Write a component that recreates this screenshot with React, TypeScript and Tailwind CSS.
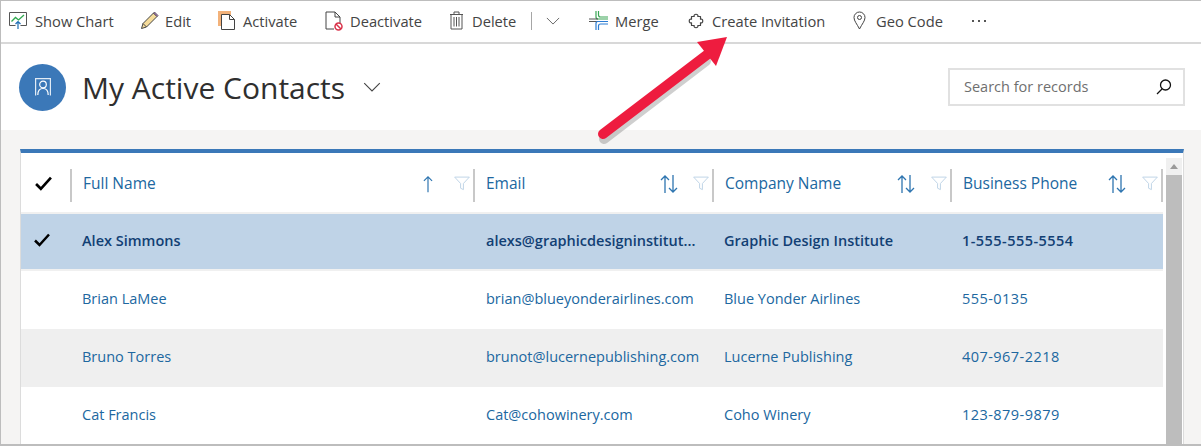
const font = { fontFamily: '"Open Sans", "Noto Sans", sans-serif' };

const rows = [
  { name: "Alex Simmons", email: "alexs@graphicdesigninstitut...", company: "Graphic Design Institute", phone: "1-555-555-5554" },
  { name: "Brian LaMee", email: "brian@blueyonderairlines.com", company: "Blue Yonder Airlines", phone: "555-0135" },
  { name: "Bruno Torres", email: "brunot@lucernepublishing.com", company: "Lucerne Publishing", phone: "407-967-2218" },
  { name: "Cat Francis", email: "Cat@cohowinery.com", company: "Coho Winery", phone: "123-879-9879" },
];

function ChartIcon() {
  return (
    <svg width="18" height="17" viewBox="0 0 18 17" fill="none">
      <path d="M6.500 13.500H.5V.5h17v13h-6" stroke="#555" strokeWidth="1" />
      <path d="M2.500 9.500l4-4 3 2.500 5.500-5" stroke="#2fa84f" strokeWidth="1.300" />
      <path d="M9 17v-7.500M6.500 12L9 9.500l2.500 2.500" stroke="#1f6fb5" strokeWidth="1.200" />
    </svg>
  );
}

function PencilIcon() {
  return (
    <svg width="19" height="19" viewBox="0 0 19 19" fill="none">
      <path d="M1.500 17.500l1.500-5L13.500 2l3.500 3.500L6.500 16z" fill="#f6dc9a" stroke="#444" strokeWidth="1" />
      <path d="M13.500 2l1-1 3.500 3.500-1 1z" fill="#b57bc4" stroke="#444" strokeWidth="0.8" />
      <path d="M3 12.500L6.500 16" stroke="#444" strokeWidth="1" />
    </svg>
  );
}

function ActivateIcon() {
  return (
    <svg width="17" height="19" viewBox="0 0 17 19" fill="none">
      <path d="M0 0h13v4H4v11H0z" fill="#f3b27a" />
      <path d="M3.500 3.500h8l5 5v10h-13z" fill="#fff" stroke="#444" strokeWidth="1" />
      <path d="M11.500 3.500v5h5" stroke="#444" strokeWidth="1" />
    </svg>
  );
}

function DeactivateIcon() {
  return (
    <svg width="18" height="20" viewBox="0 0 18 20" fill="none">
      <path d="M1 1h9l5 5v6M1 1v17h8" stroke="#444" strokeWidth="1" />
      <path d="M10 1v5h5" stroke="#444" strokeWidth="1" />
      <circle cx="13.500" cy="15.500" r="3.500" fill="#fff" stroke="#d9324a" strokeWidth="1.500" />
      <path d="M11 13l5 5" stroke="#d9324a" strokeWidth="1.500" />
    </svg>
  );
}

function TrashIcon() {
  return (
    <svg width="15" height="19" viewBox="0 0 15 19" fill="none" stroke="#555" strokeWidth="1">
      <path d="M1 3.500h13M5 3.500v-2.500h5v2.500M2 3.500v14.500h11V3.500" />
      <path d="M5 6v9.500M7.500 6v9.500M10 6v9.500" />
    </svg>
  );
}

function MergeIcon() {
  return (
    <svg width="19" height="19" viewBox="0 0 19 19" fill="none" strokeWidth="1.200">
      <path d="M7 0v6q0 2 2 2h10" stroke="#3aa655" />
      <path d="M9.500 0v4q0 2 2 2H19" stroke="#3aa655" />
      <path d="M0 8h9M0 10.500h9" stroke="#555" />
      <path d="M19 10.500H9q-2 0-2 2V19" stroke="#2b7cd3" />
      <path d="M19 13h-7.500q-2 0-2 2v4" stroke="#2b7cd3" />
    </svg>
  );
}

function PuzzleIcon() {
  return (
    <svg width="16" height="16" viewBox="0 0 16 16" fill="none" stroke="#444" strokeWidth="1.200" strokeLinejoin="round">
      <path d="M3.500 3.500H6.200c-1.200-3 4.800-3 3.600 0h2.700v2.700c3-1.200 3 4.800 0 3.600v2.700H9.800c1.200 3-4.800 3-3.600 0H3.500V9.800c-3 1.200-3-4.800 0-3.600z" />
    </svg>
  );
}

function PinIcon() {
  return (
    <svg width="13" height="19" viewBox="0 0 13 19" fill="none" stroke="#444" strokeWidth="1">
      <path d="M6.500 18C4 13 1 10 1 6.500a5.500 5.500 0 0 1 11 0C12 10 9 13 6.500 18z" />
      <circle cx="6.500" cy="6.500" r="2" />
    </svg>
  );
}

function Chevron({ w, h, color }: { w: number; h: number; color: string }) {
  return (
    <svg width={w} height={h} viewBox="0 0 16 9" fill="none">
      <path d="M1 1l7 7 7-7" stroke={color} strokeWidth="1" />
    </svg>
  );
}

function Check({ size }: { size: number }) {
  return (
    <svg width={size} height={size} viewBox="0 0 16 16" fill="none">
      <path d="M1 8.500l4.500 4.500L15 2.500" stroke="#000" strokeWidth="2.500" />
    </svg>
  );
}

function FilterIcon() {
  return (
    <svg width="16" height="15" viewBox="0 0 17 15" fill="none">
      <path d="M.7.700h15.600L10 7.500v6.500l-3-1.500v-5z" stroke="#bcd2e5" strokeWidth="1" />
    </svg>
  );
}

function UpArrow() {
  return (
    <svg width="10" height="18" viewBox="0 0 11 18" fill="none" stroke="#2e75b0" strokeWidth="1.300">
      <path d="M5.500 18V1M1 5.500L5.500 1 10 5.500" />
    </svg>
  );
}

function SortArrows() {
  return (
    <svg width="18" height="18" viewBox="0 0 18 18" fill="none" stroke="#2e75b0" strokeWidth="1.300">
      <path d="M5 18V1M1 5L5 1l4 4" />
      <path d="M13 0v17M9 13l4 4 4-4" />
    </svg>
  );
}

function ToolItem({ icon, label, className }: { icon: React.ReactNode; label: string; className: string }) {
  return (
    <div className={`flex items-center ${className}`}>
      {icon}
      <span className="text-[14.700px] text-[#444] whitespace-nowrap">{label}</span>
    </div>
  );
}

function HeaderCell({ label, icon, iconGap }: { label: string; icon: React.ReactNode; iconGap: string }) {
  return (
    <div className="flex items-center border-r-2 border-[#c8c8c8] h-[33px] pb-[4px] pl-[11px] pr-[3px]">
      <span className="text-[15.500px] text-[#20679f] flex-1 whitespace-nowrap">{label}</span>
      <div className={iconGap}>{icon}</div>
      <FilterIcon />
    </div>
  );
}

const gridCols = "grid grid-cols-[51px_403px_239px_238px_211px]";

export default function App() {
  return (
    <div className="relative h-[446px] w-[1201px] overflow-hidden bg-[#f5f4f3] border-l border-t border-b-2 border-[#bdbdbd]" style={font}>
      {/* command bar */}
      <div className="flex items-center h-[43px] bg-white border-b-2 border-[#d8d8d8] pb-[1px] pl-[8px]">
        <ToolItem icon={<ChartIcon />} label="Show Chart" className="w-[131px] gap-[8px]" />
        <ToolItem icon={<PencilIcon />} label="Edit" className="w-[78px] gap-[6px]" />
        <ToolItem icon={<ActivateIcon />} label="Activate" className="w-[107px] gap-[8px]" />
        <ToolItem icon={<DeactivateIcon />} label="Deactivate" className="w-[124px] gap-[7px]" />
        <ToolItem icon={<TrashIcon />} label="Delete" className="w-[82px] gap-[8px]" />
        <div className="w-px h-[18px] bg-[#a6a6a6]" />
        <div className="ml-[14px] w-[43px]"><Chevron w={14} h={8} color="#555" /></div>
        <ToolItem icon={<MergeIcon />} label="Merge" className="w-[99px] gap-[7px]" />
        <ToolItem icon={<PuzzleIcon />} label="Create Invitation" className="w-[165px] gap-[8px]" />
        <ToolItem icon={<PinIcon />} label="Geo Code" className="w-[119px] gap-[10px]" />
        <div className="flex gap-[4px]">
          <div className="w-[2px] h-[2px] bg-[#555]" />
          <div className="w-[2px] h-[2px] bg-[#555]" />
          <div className="w-[2px] h-[2px] bg-[#555]" />
        </div>
      </div>

      {/* view title */}
      <div className="flex items-center h-[86px] bg-white pl-[18px] pr-[16px]">
        <div className="flex items-center justify-center w-[47px] h-[47px] rounded-full bg-[#3b78b8]">
          <svg width="16" height="18" viewBox="0 0 16 18" fill="none" stroke="#fff" strokeWidth="1.200">
            <path d="M.6 17.500V.6h14.800v16.900" opacity="0.85" />
            <circle cx="8" cy="6.500" r="3.300" />
            <path d="M2.800 17c0-4 2-6.500 5.200-6.500s5.200 2.500 5.200 6.500" />
          </svg>
        </div>
        <h1 className="ml-4 mt-[2px] text-[30px] font-normal text-[#2f2f2f] leading-none">My Active Contacts</h1>
        <div className="ml-[18px]"><Chevron w={18} h={10} color="#444" /></div>
        <div className="ml-auto flex items-center justify-between w-[237px] h-[38px] bg-white border-2 border-[#e1e1e1] pl-[14px] pr-[11px]">
          <span className="text-[14.500px] text-[#6f6f6f]">Search for records</span>
          <svg width="16" height="16" viewBox="0 0 16 16" fill="none" stroke="#111" strokeWidth="1.300">
            <circle cx="9.500" cy="6" r="5" />
            <path d="M6 10L1 15" />
          </svg>
        </div>
      </div>

      {/* grid */}
      <div className="pt-[19px] pl-[19px]">
        <div className="w-[1164px] bg-white border-t-[4px] border-t-[#3b78b8] border-x border-x-[#dcdcdc]">
          <div className="flex">
            <div className="w-[1142px]">
              <div className={`${gridCols} items-end h-[61px] pb-[10px] border-b-2 border-[#f0f0f0]`}>
                <div className="flex items-center border-r-2 border-[#c8c8c8] h-[33px] pb-[4px] pl-[14px]"><Check size={17} /></div>
                <HeaderCell label="Full Name" icon={<UpArrow />} iconGap="mr-[21px]" />
                <HeaderCell label="Email" icon={<SortArrows />} iconGap="mr-[15px]" />
                <HeaderCell label="Company Name" icon={<SortArrows />} iconGap="mr-[16px]" />
                <HeaderCell label="Business Phone" icon={<SortArrows />} iconGap="mr-[16px]" />
              </div>
              {rows.map((r, i) => (
                <div
                  key={r.name}
                  className={`${gridCols} items-center text-[14.500px] ${i === 0 ? "bg-[#bfd3e7] text-[#123f74] font-semibold h-[57px] pb-[1px] border-b-2 border-[#f0f0f0]" : "h-[58px] pb-[2px] text-[#20679f]"} ${i === 2 ? "bg-[#efefef]" : ""}`}
                >
                  <div className="pl-[13px] pb-[3px]">{i === 0 && <Check size={16} />}</div>
                  <div className="pl-[10px] whitespace-nowrap">{r.name}</div>
                  <div className="pl-[11px] whitespace-nowrap">{r.email}</div>
                  <div className="pl-[10px] whitespace-nowrap">{r.company}</div>
                  <div className="pl-[10px] whitespace-nowrap tracking-[0.45px]">{r.phone}</div>
                </div>
              ))}
            </div>
            {/* scrollbar */}
            <div className="ml-[3px] w-[16px] pt-[5px]">
              <div className="flex items-center justify-center h-[17px] bg-[#f0f0f0]">
                <div className="w-0 h-0 border-x-[4px] border-x-transparent border-b-[5px] border-b-[#9a9a9a]" />
              </div>
              <div className="h-[400px] bg-[#bdbdbd]" />
            </div>
          </div>
        </div>
      </div>

      {/* annotation arrow */}
      <svg className="absolute -left-px -top-px pointer-events-none" width="1201" height="446" viewBox="0 0 1201 446" fill="none">
        <path d="M603 136L705 58" stroke="#00000030" strokeWidth="10" strokeLinecap="round" transform="translate(1 3)" />
        <path d="M603 134L708 54" stroke="#ee1c3f" strokeWidth="10" strokeLinecap="round" />
        <path d="M727 37L697 42L716 66z" fill="#ee1c3f" />
      </svg>
    </div>
  );
}
